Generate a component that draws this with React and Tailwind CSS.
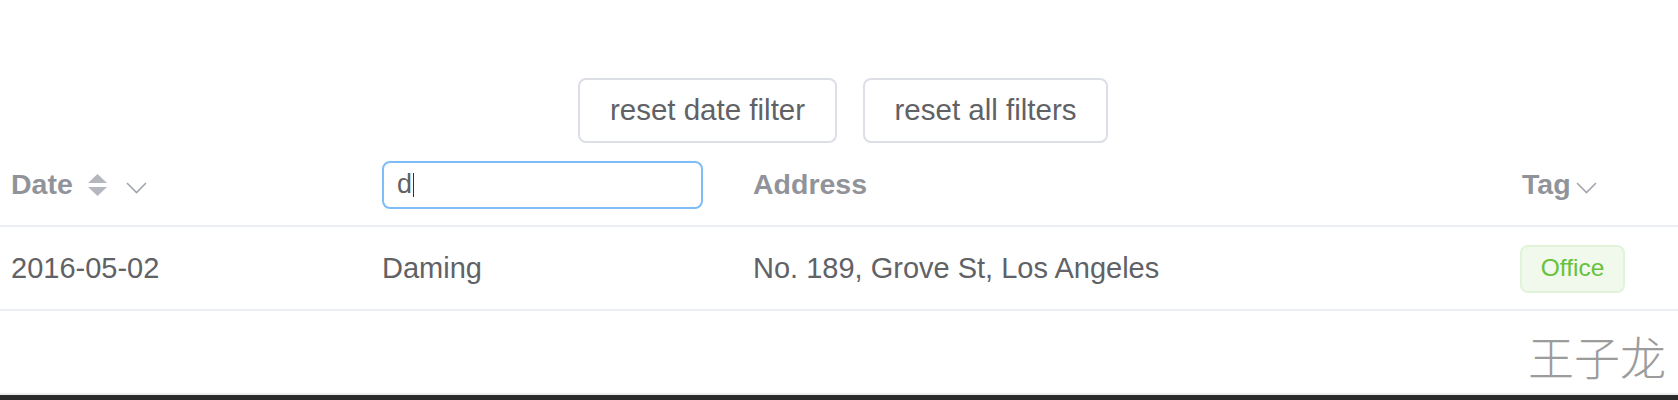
import React from 'react';

// caret pair used by the sortable column
function SortCaret() {
  return (
    <svg width="19" height="22" viewBox="0 0 19 22" className="shrink-0">
      <polygon points="0,9 9.5,0 19,9" fill="#b4b7bd" />
      <polygon points="0,13 9.5,22 19,13" fill="#b4b7bd" />
    </svg>
  );
}

function Chevron() {
  return (
    <svg width="21" height="12" viewBox="0 0 21 12" className="mt-[6px] shrink-0">
      <polyline points="1,1 10.5,10.5 20,1" fill="none" stroke="#a3a6ad" strokeWidth="1.6" />
    </svg>
  );
}

export default function App() {
  return (
    <div className="relative flex h-[400px] w-full flex-col bg-white font-['Liberation_Sans',Arial,sans-serif]">
      {/* filter buttons */}
      <div className="flex justify-center gap-[26px] pl-2 pt-[78px]">
        <button
          type="button"
          className="h-[65px] w-[259px] rounded-lg border-2 border-[#dcdfe6] bg-white text-[29.5px] text-[#606266]"
        >
          reset date filter
        </button>
        <button
          type="button"
          className="h-[65px] w-[245px] rounded-lg border-2 border-[#dcdfe6] bg-white text-[29.5px] text-[#606266]"
        >
          reset all filters
        </button>
      </div>

      {/* table head */}
      <div className="grid h-[84px] grid-cols-[371px_371px_769px_1fr] items-center border-b-2 border-[#ebeef5] pt-px text-[28.5px] font-bold text-[#909399]">
        <div className="flex items-center pl-[11px]">
          <span>Date</span>
          <span className="ml-[15px] flex">
            <SortCaret />
          </span>
          <span className="ml-[19px] flex">
            <Chevron />
          </span>
        </div>
        <div className="pl-[11px]">
          <div className="flex h-[48px] w-[321px] items-center rounded-lg border-2 border-[#7fbcfa] pl-[13px] text-[27px] font-normal text-[#606266]">
            <span>d</span>
            <span className="ml-px h-[24px] w-px bg-[#333]"></span>
          </div>
        </div>
        <div className="pl-[11px]">Address</div>
        <div className="flex items-center pl-[11px]">
          <span>Tag</span>
          <span className="ml-[5px] flex">
            <Chevron />
          </span>
        </div>
      </div>

      {/* table body */}
      <div className="grid h-[84px] grid-cols-[371px_371px_769px_1fr] items-center border-b-2 border-[#ebeef5] pt-px text-[29px] text-[#606266]">
        <div className="pl-[11px]">2016-05-02</div>
        <div className="pl-[11px]">Daming</div>
        <div className="pl-[11px]">No. 189, Grove St, Los Angeles</div>
        <div className="pl-[9px]">
          <span className="inline-flex h-[48px] w-[105px] items-center justify-center rounded-lg border-2 border-[#e1f3d8] bg-[#f0f9eb] text-[24.5px] text-[#67c23a]">
            Office
          </span>
        </div>
      </div>

      <div className="flex-1"></div>
      <div className="h-[2px] bg-[#ececec]"></div>
      <div className="h-[5px] bg-[#2b2b2b]"></div>

      {/* watermark */}
      <div className="absolute right-[12px] top-[332px] font-['Noto_Sans_CJK_SC',sans-serif] text-[46px] font-light leading-none text-[#9c9c9c]">
        王子龙
      </div>
    </div>
  );
}
